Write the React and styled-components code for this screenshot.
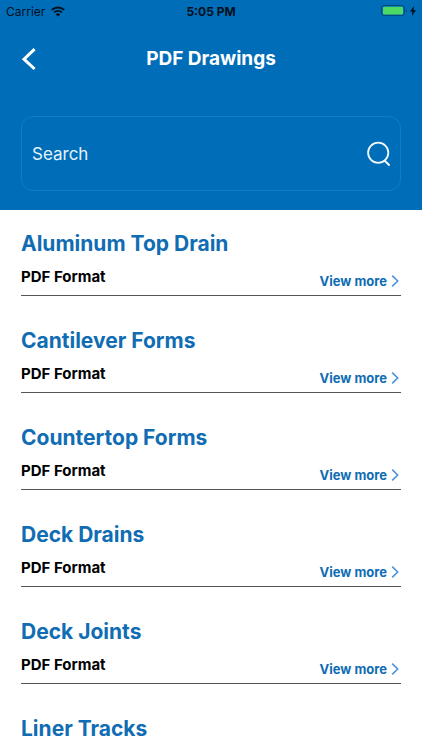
import React, { useState } from "react";
import styled, { createGlobalStyle } from "styled-components";

const drawings = [
  "Aluminum Top Drain",
  "Cantilever Forms",
  "Countertop Forms",
  "Deck Drains",
  "Deck Joints",
  "Liner Tracks",
];

export default function App() {
  const [query, setQuery] = useState("");
  const shown = drawings.filter((name) =>
    name.toLowerCase().includes(query.toLowerCase())
  );

  return (
    <Screen>
      <GlobalStyle />
      <Header>
        <StatusBar>
          <Carrier>
            Carrier
            <WifiIcon />
          </Carrier>
          <Clock>5:05 PM</Clock>
          <Power>
            <BatteryIcon />
            <BoltIcon />
          </Power>
        </StatusBar>
        <NavBar>
          <BackButton type="button" aria-label="Back">
            <svg width="16" height="24" viewBox="0 0 16 24" fill="none">
              <path d="M14.6 2.2 4 12.2l10.6 9.8" stroke="#fff" strokeWidth="3" />
            </svg>
          </BackButton>
          <PageTitle>PDF Drawings</PageTitle>
        </NavBar>
        <SearchBox>
          <SearchInput
            type="text"
            placeholder="Search"
            aria-label="Search"
            value={query}
            onChange={(e) => setQuery(e.target.value)}
          />
          <SearchButton type="button" aria-label="Submit search">
            <svg width="24" height="26" viewBox="0 0 24 26" fill="none">
              <circle cx="12.2" cy="11.8" r="10.1" stroke="#f2fafe" strokeWidth="1.8" />
              <path d="m18 19 5.6 5.6" stroke="#f2fafe" strokeWidth="2" />
            </svg>
          </SearchButton>
        </SearchBox>
      </Header>
      <List>
        {shown.map((name) => (
          <Item key={name}>
            <ItemTitle>{name}</ItemTitle>
            <ItemRow>
              <Format>PDF Format</Format>
              <MoreLink href="#">
                View more
                <svg width="8" height="12" viewBox="0 0 8 12" fill="none">
                  <path d="m1.2.6 5.5 5.4-5.5 5.4" stroke="#4b93dc" strokeWidth="1.6" />
                </svg>
              </MoreLink>
            </ItemRow>
          </Item>
        ))}
      </List>
    </Screen>
  );
}

function WifiIcon() {
  return (
    <svg width="14" height="11" viewBox="0 0 14 11" fill="none" stroke="#03101c">
      <path d="M.8 3.9a8.9 8.9 0 0 1 12.4 0" strokeWidth="2" />
      <path d="M3.1 6.4a5.6 5.6 0 0 1 7.8 0" strokeWidth="1.8" />
      <path d="M7 10.6 4.8 8.4a3.2 3.2 0 0 1 4.4 0z" fill="#03101c" stroke="none" />
    </svg>
  );
}

function BatteryIcon() {
  return (
    <svg width="27" height="12" viewBox="0 0 27 12" fill="none">
      <rect x=".5" y=".5" width="23" height="10" rx="2.5" stroke="#024a7c" />
      <rect x="2" y="1.8" width="20" height="7.6" rx="1.2" fill="#4cd964" />
      <path d="M25 4v3.5c1.3-.5 1.3-3 0-3.5z" fill="#024a7c" />
    </svg>
  );
}

function BoltIcon() {
  return (
    <svg width="6" height="10" viewBox="0 0 6 10">
      <path d="M4 0 0 5.6h2.5L1.8 10 6 4.2H3.5z" fill="#03101c" />
    </svg>
  );
}

const GlobalStyle = createGlobalStyle`
  * {
    box-sizing: border-box;
  }
  body {
    margin: 0;
    background: #fff;
    font-family: Inter, "Liberation Sans", sans-serif;
  }
`;

const Screen = styled.div`
  display: flex;
  flex-direction: column;
  height: 100vh;
`;

const Header = styled.header`
  flex-shrink: 0;
  padding-bottom: 19px;
  background: #006db8;
`;

const StatusBar = styled.div`
  display: grid;
  grid-template-columns: 1fr auto 1fr;
  align-items: center;
  height: 22px;
  padding: 0 6px;
  font-size: 12px;
  color: #03101c;
`;

const Carrier = styled.div`
  display: flex;
  align-items: center;
  gap: 6px;
`;

const Clock = styled.div`
  font-weight: 700;
`;

const Power = styled.div`
  display: flex;
  align-items: center;
  justify-content: flex-end;
  gap: 2px;
`;

const NavBar = styled.div`
  display: grid;
  grid-template-columns: 24px 1fr 24px;
  align-items: center;
  height: 74px;
  padding: 0 20px;
`;

const BackButton = styled.button`
  display: flex;
  padding: 0;
  border: 0;
  background: none;
  cursor: pointer;
`;

const PageTitle = styled.h1`
  margin: 0;
  font-size: 19px;
  font-weight: 700;
  line-height: 24px;
  text-align: center;
  color: #fff;
`;

const SearchBox = styled.div`
  display: flex;
  align-items: center;
  height: 75px;
  margin: 20px 21px 0;
  padding: 0 10px;
  border: 1px solid #107dc8;
  border-radius: 12px;
`;

const SearchInput = styled.input`
  flex: 1;
  min-width: 0;
  height: 100%;
  padding: 0;
  border: 0;
  outline: 0;
  background: none;
  font-family: inherit;
  font-size: 17px;
  color: #fff;

  &::placeholder {
    color: #e4f3fc;
    opacity: 1;
  }
`;

const SearchButton = styled.button`
  display: flex;
  padding: 0;
  border: 0;
  background: none;
  cursor: pointer;
`;

const List = styled.ul`
  flex: 1;
  min-height: 0;
  margin: 0;
  padding: 0 21px;
  overflow-y: auto;
  list-style: none;
  scrollbar-width: none;
`;

const Item = styled.li`
  padding-top: 20px;
  margin-bottom: 11px;
  border-bottom: 1px solid #555;
`;

const ItemTitle = styled.h2`
  margin: 0;
  font-size: 21px;
  font-weight: 700;
  line-height: 28px;
  color: #106cb3;
`;

const ItemRow = styled.div`
  display: flex;
  align-items: flex-start;
  justify-content: space-between;
  height: 37px;
  padding-top: 10px;
`;

const Format = styled.span`
  font-size: 15px;
  font-weight: 700;
  line-height: 18px;
  color: #000;
`;

const MoreLink = styled.a`
  display: flex;
  align-items: center;
  gap: 4px;
  margin-top: 4px;
  padding-right: 2px;
  font-size: 13px;
  font-weight: 700;
  line-height: 18px;
  color: #106cb3;
  text-decoration: none;
`;
